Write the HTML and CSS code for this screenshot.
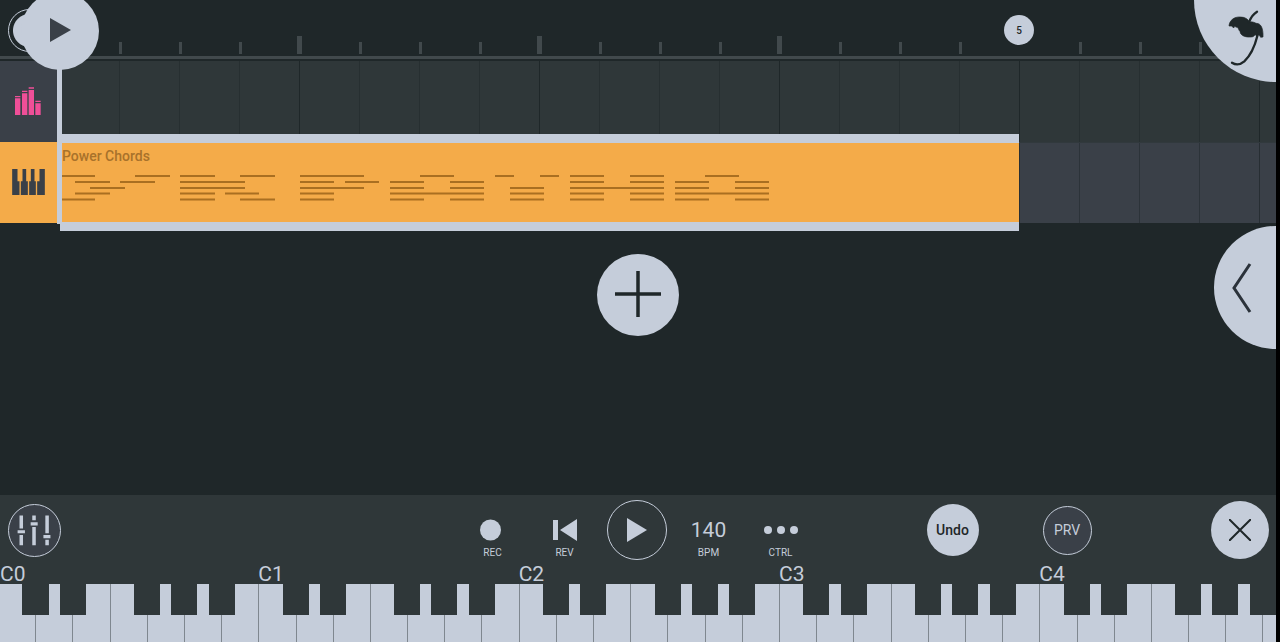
FILE: index.html
```html
<!DOCTYPE html>
<html lang="en">
<head>
    <meta charset="UTF-8">
    <meta name="viewport" content="width=device-width, initial-scale=1.0">
    <title>Song editor</title>
    <link rel="stylesheet" href="styles.css">
</head>
<body>

    <!-- Ruler -->
    <header class="ruler">
        <div class="ticks" id="ticks"></div>
        <div class="loop-start"></div>
        <button class="bar-marker">5</button>
        <button class="menu-button" aria-label="Menu">
            <svg viewBox="42 0 246 246">
                <path fill="#1f2729" stroke="#1f2729" stroke-width="2" d="M147 78C148 60 164 50 180 51C195 51 204 57 208 66C218 64 226 69 229 70C243 70 250 85 249 111L242 112L237 104L231 110L226 104L219 110C206 113 190 110 185 104C179 99 182 94 178 92C175 86 173 80 170 82L164 79L161 84L155 78Z"/>
                <path fill="none" stroke="#1f2729" stroke-width="7" stroke-linecap="round" d="M207 66Q216 44 231 35"/>
                <path fill="none" stroke="#1f2729" stroke-width="7" stroke-linecap="round" d="M232 108C224 140 208 170 193 184Q174 200 156 188"/>
            </svg>
        </button>
    </header>

    <!-- Tracks -->
    <main class="tracks">
        <section class="track">
            <button class="track-head drums" aria-label="Drums">
                <svg width="26" height="28" viewBox="45 262 78 84">
                    <path fill="#ef4f98" d="M45 289h16v4h-16zM45 296h16v50h-16zM66 273h16v4h-16zM66 281h16v65h-16zM86 263h16v4h-16zM86 271h16v75h-16zM106 303h16v4h-16zM106 311h16v35h-16z"/>
                </svg>
            </button>
            <div class="lane"></div>
        </section>
        <section class="track">
            <button class="track-head keys" aria-label="Keys">
                <svg width="33" height="26" viewBox="35 506 98 78">
                    <path fill="#3a4048" d="M35 506h16v37h6v41h-22zM66 506h11v37h5v41h-21v-41h5zM91 506h11v37h4v41h-20v-41h5zM117 506h16v78h-23v-41h7z"/>
                </svg>
            </button>
            <div class="lane light">
                <div class="clip">
                    <span class="clip-name">Power Chords</span>
                    <svg class="notes" width="710" height="28" viewBox="60 174 710 28">
                        <path d="M60 176h35M135 176h35M180 176h35M240 176h35M300 176h64M420 176h34M495 176h19M540 176h19M570 176h34M630 176h34M705 176h34"/>
                        <path d="M75 182h35M120 182h35M180 182h65M300 182h34M345 182h34M390 182h34M450 182h34M570 182h34M630 182h34M675 182h34M735 182h34"/>
                        <path d="M90 188h35M180 188h65M300 188h64M390 188h34M450 188h34M510 188h34M570 188h94M675 188h34M735 188h34"/>
                        <path d="M75 193.5h35M180 193.5h35M225 193.5h34M300 193.5h34M390 193.5h94M510 193.5h34M570 193.5h34M630 193.5h34M675 193.5h94"/>
                        <path d="M60 199.5h35M180 199.5h35M240 199.5h35M300 199.5h34M390 199.5h34M450 199.5h34M510 199.5h34M570 199.5h34M630 199.5h34M675 199.5h34M735 199.5h34"/>
                    </svg>
                </div>
            </div>
        </section>
        <div class="playhead"></div>
        <button class="playhead-button" aria-label="Play from here">
            <svg width="22" height="26" viewBox="0 0 22 26"><path fill="#3a4048" d="M1 0L22 12L1 24Z"/></svg>
        </button>

        <button class="add-track" aria-label="Add track">
            <svg width="48" height="48" viewBox="0 0 48 48"><path stroke="#1f2729" stroke-width="3.500" d="M24 1V47M1 24H47"/></svg>
        </button>
        <button class="side-button" aria-label="Open panel">
            <svg width="20" height="52" viewBox="0 0 20 52"><path fill="none" stroke="#2b323a" stroke-width="3" d="M18 2L2 26L18 50"/></svg>
        </button>
    </main>

    <!-- Toolbar -->
    <footer class="bottom">
        <div class="toolbar">
            <div class="left">
                <button class="round mixer" aria-label="Mixer">
                    <svg width="53" height="53" viewBox="24 40 160 160">
                        <path fill="#c5cdda" d="M57 73h11v41h-11zM51 119h23v10h-23zM57 134h11v32h-11zM97 73h11v15h-11zM92 94h22v10h-22zM97 109h11v57h-11zM138 73h11v56h-11zM132 134h22v10h-22zM138 149h11v17h-11z"/>
                    </svg>
                </button>
            </div>
            <div class="transport">
                <button class="tool">
                    <svg width="26" height="24" viewBox="0 0 26 24"><circle cx="10.500" cy="12" r="10.500" fill="#c5cdda"/></svg>
                    REC
                </button>
                <button class="tool">
                    <svg width="24" height="24" viewBox="0 0 24 24"><path fill="#c5cdda" d="M0 2h5v20h-5zM24 1v22L7 12z"/></svg>
                    REV
                </button>
                <button class="round play" aria-label="Play">
                    <svg width="22" height="26" viewBox="0 0 22 26"><path fill="#c5cdda" d="M1 1L21 13L1 25Z"/></svg>
                </button>
                <button class="tool"><b>140</b>BPM</button>
                <button class="tool">
                    <svg width="34" height="24" viewBox="0 0 34 24"><g fill="#c5cdda"><circle cx="4" cy="12" r="4"/><circle cx="17" cy="12" r="4"/><circle cx="30" cy="12" r="4"/></g></svg>
                    CTRL
                </button>
            </div>
            <div class="right">
                <button class="round undo">Undo</button>
                <button class="round prv">PRV</button>
                <button class="round close" aria-label="Close">
                    <svg width="22" height="22" viewBox="0 0 22 22"><path stroke="#1f2729" stroke-width="2" d="M0 0L22 22M22 0L0 22"/></svg>
                </button>
            </div>
        </div>
        <div class="keyboard" id="keyboard"></div>
    </footer>

    <script>
        const ticks = document.getElementById('ticks');
        for (let i = 1; i < 20; i++) {
            const tick = document.createElement('span');
            // every fourth beat starts a bar
            tick.className = i % 4 === 0 ? 'tick bar' : 'tick';
            if (i === 16) tick.className = 'tick hidden';
            ticks.appendChild(tick);
        }

        const keyboard = document.getElementById('keyboard');
        for (let n = 0; n < 5; n++) {
            const octave = document.createElement('div');
            octave.className = 'octave';
            let keys = '';
            for (const note of ['C', 'D', 'E', 'F', 'G', 'A', 'B']) {
                keys += '<button class="white" aria-label="' + note + n + '"></button>';
            }
            for (const note of ['cs', 'ds', 'fs', 'gs', 'as']) {
                keys += '<button class="black ' + note + '" aria-label="' + note[0].toUpperCase() + '#' + n + '"></button>';
            }
            octave.innerHTML = '<span class="octave-name">C' + n + '</span><div class="octave-keys">' + keys + '</div>';
            keyboard.appendChild(octave);
        }
    </script>
</body>
</html>
```
FILE: styles.css
```css
* {
    box-sizing: border-box;
}

body {
    margin: 0;
    min-height: 100vh;
    display: flex;
    flex-direction: column;
    overflow: hidden;
    position: relative;
    border-right: 4px solid #000;
    background-color: #1f2729;
    color: #c5cdda;
    font-family: Roboto, "Liberation Sans", sans-serif;
}

button {
    padding: 0;
    border: none;
    background: none;
    color: inherit;
    font-family: inherit;
    cursor: pointer;
}

svg {
    display: block;
}

/* Ruler */
.ruler {
    position: relative;
    height: 61px;
    padding-top: 36px;
}

.ticks {
    height: 23px;
    padding-left: 60px;
    display: flex;
    overflow: hidden;
    border-bottom: 3px solid #41494c;
}

.tick {
    flex: 0 0 60px;
    height: 18px;
    display: flex;
    align-items: flex-end;
    justify-content: flex-end;
}

.tick::after {
    content: "";
    width: 3px;
    height: 12px;
    margin-right: -2px;
    background-color: #41494c;
}

.tick.bar::after {
    width: 5px;
    height: 18px;
}

.tick.hidden::after {
    visibility: hidden;
}

.loop-start {
    position: absolute;
    top: 9px;
    left: 8px;
    width: 43px;
    height: 43px;
    border: 1px solid #c5cdda;
    border-radius: 50%;
    background: radial-gradient(circle, #c5cdda 16px, #1f2729 17px);
}

.bar-marker {
    position: absolute;
    top: 15px;
    left: 1004px;
    width: 30px;
    height: 30px;
    border-radius: 50%;
    background-color: #c5cdda;
    color: #1f2729;
    font-size: 10px;
    font-weight: 500;
}

.menu-button {
    position: absolute;
    z-index: 2;
    top: 0;
    right: 0;
    width: 82px;
    height: 82px;
    border-radius: 0 0 0 82px;
    background-color: #c5cdda;
}

/* Tracks */
.tracks {
    position: relative;
    flex: 1;
    display: flex;
    flex-direction: column;
}

.track {
    display: flex;
    height: 81px;
}

.track-head {
    flex: 0 0 60px;
    padding: 0 4px 2px 0;
    display: flex;
    align-items: center;
    justify-content: center;
}

.track-head.drums {
    background-color: #3a4048;
}

.track-head.keys {
    background-color: #f4ab49;
}

.lane {
    position: relative;
    flex: 1;
    background-color: #2f3739;
    background-image:
        repeating-linear-gradient(to right, transparent 0 239px, #1f2729 239px 240px),
        repeating-linear-gradient(to right, transparent 0 59px, #272f31 59px 60px);
}

.lane.light {
    border-top: 1px solid #31393d;
    background-color: #3a4048;
    background-image:
        repeating-linear-gradient(to right, transparent 0 239px, #272e33 239px 240px),
        repeating-linear-gradient(to right, transparent 0 59px, #2c3339 59px 60px);
}

.clip {
    position: absolute;
    top: -9px;
    left: 0;
    width: 959px;
    height: 97px;
    border-top: 9px solid #c5cdda;
    border-bottom: 9px solid #c5cdda;
    background-color: #f4ab49;
}

.clip-name {
    display: block;
    padding: 5px 0 0 2px;
    color: #a8722b;
    font-size: 14px;
    font-weight: 500;
    line-height: 16px;
}

.notes {
    margin-top: 10px;
}

.notes path {
    stroke: #a96f21;
    stroke-width: 2;
}

.playhead {
    position: absolute;
    top: 0;
    left: 57px;
    width: 5px;
    height: 163px;
    background-color: #c5cdda;
}

.playhead-button {
    position: absolute;
    top: -69px;
    left: 21px;
    width: 78px;
    height: 78px;
    display: flex;
    align-items: center;
    justify-content: center;
    border-radius: 50%;
    background-color: #c5cdda;
}

.add-track {
    width: 82px;
    height: 82px;
    margin: 31px auto 0;
    display: flex;
    justify-content: center;
    padding-top: 16px;
    border-radius: 50%;
    background-color: #c5cdda;
}

.side-button {
    position: absolute;
    top: 165px;
    right: 0;
    width: 62px;
    height: 123px;
    display: flex;
    align-items: center;
    padding-left: 18px;
    border-radius: 62px 0 0 62px;
    background-color: #c5cdda;
}

/* Bottom panel */
.bottom {
    overflow: hidden;
    background-color: #2f3739;
}

.toolbar {
    display: grid;
    grid-template-columns: 1fr auto 1fr;
    align-items: center;
    height: 69px;
    padding: 1px 7px 0 8px;
}

.transport {
    display: grid;
    grid-template-columns: repeat(5, 72px);
    align-items: center;
    justify-items: center;
    padding-right: 4px;
}

.tool {
    display: flex;
    flex-direction: column;
    align-items: center;
    gap: 5px;
    padding-top: 17px;
    font-size: 10px;
    line-height: 12px;
}

.tool b {
    font-size: 21px;
    font-weight: 400;
    line-height: 24px;
}

.round {
    display: flex;
    align-items: center;
    justify-content: center;
    border-radius: 50%;
    font-size: 14px;
}

.mixer {
    width: 53px;
    height: 53px;
    border: 1px solid #c5cdda;
    background-color: #3a4048;
}

.play {
    width: 60px;
    height: 60px;
    border: 1px solid #c5cdda;
}

.right {
    display: flex;
    align-items: center;
    padding-left: 106px;
}

.undo {
    width: 52px;
    height: 52px;
    margin-right: 64px;
    background-color: #c5cdda;
    color: #1f2729;
    font-weight: 500;
}

.prv {
    width: 49px;
    height: 49px;
    border: 1px solid #c5cdda;
    background-color: #3a4048;
}

.close {
    width: 58px;
    height: 58px;
    margin-left: auto;
    background-color: #c5cdda;
}

/* Keyboard */
.keyboard {
    display: flex;
    margin-left: -2px;
}

.octave {
    flex: 0 0 20.37%;
}

.octave-name {
    display: block;
    font-size: 21px;
    line-height: 20px;
}

.octave:first-child .octave-name {
    padding-left: 2px;
}

.octave-keys {
    position: relative;
    display: flex;
    height: 58px;
}

.white {
    flex: 1;
    border-left: 1px solid #7f878f;
    background-color: #c5cdda;
}

.black {
    position: absolute;
    top: 0;
    width: 10%;
    height: 31px;
    background-color: #2f3739;
}

.cs { left: 9.4%; }
.ds { left: 23.7%; }
.fs { left: 52.2%; }
.gs { left: 66.4%; }
.as { left: 80.9%; }
```
